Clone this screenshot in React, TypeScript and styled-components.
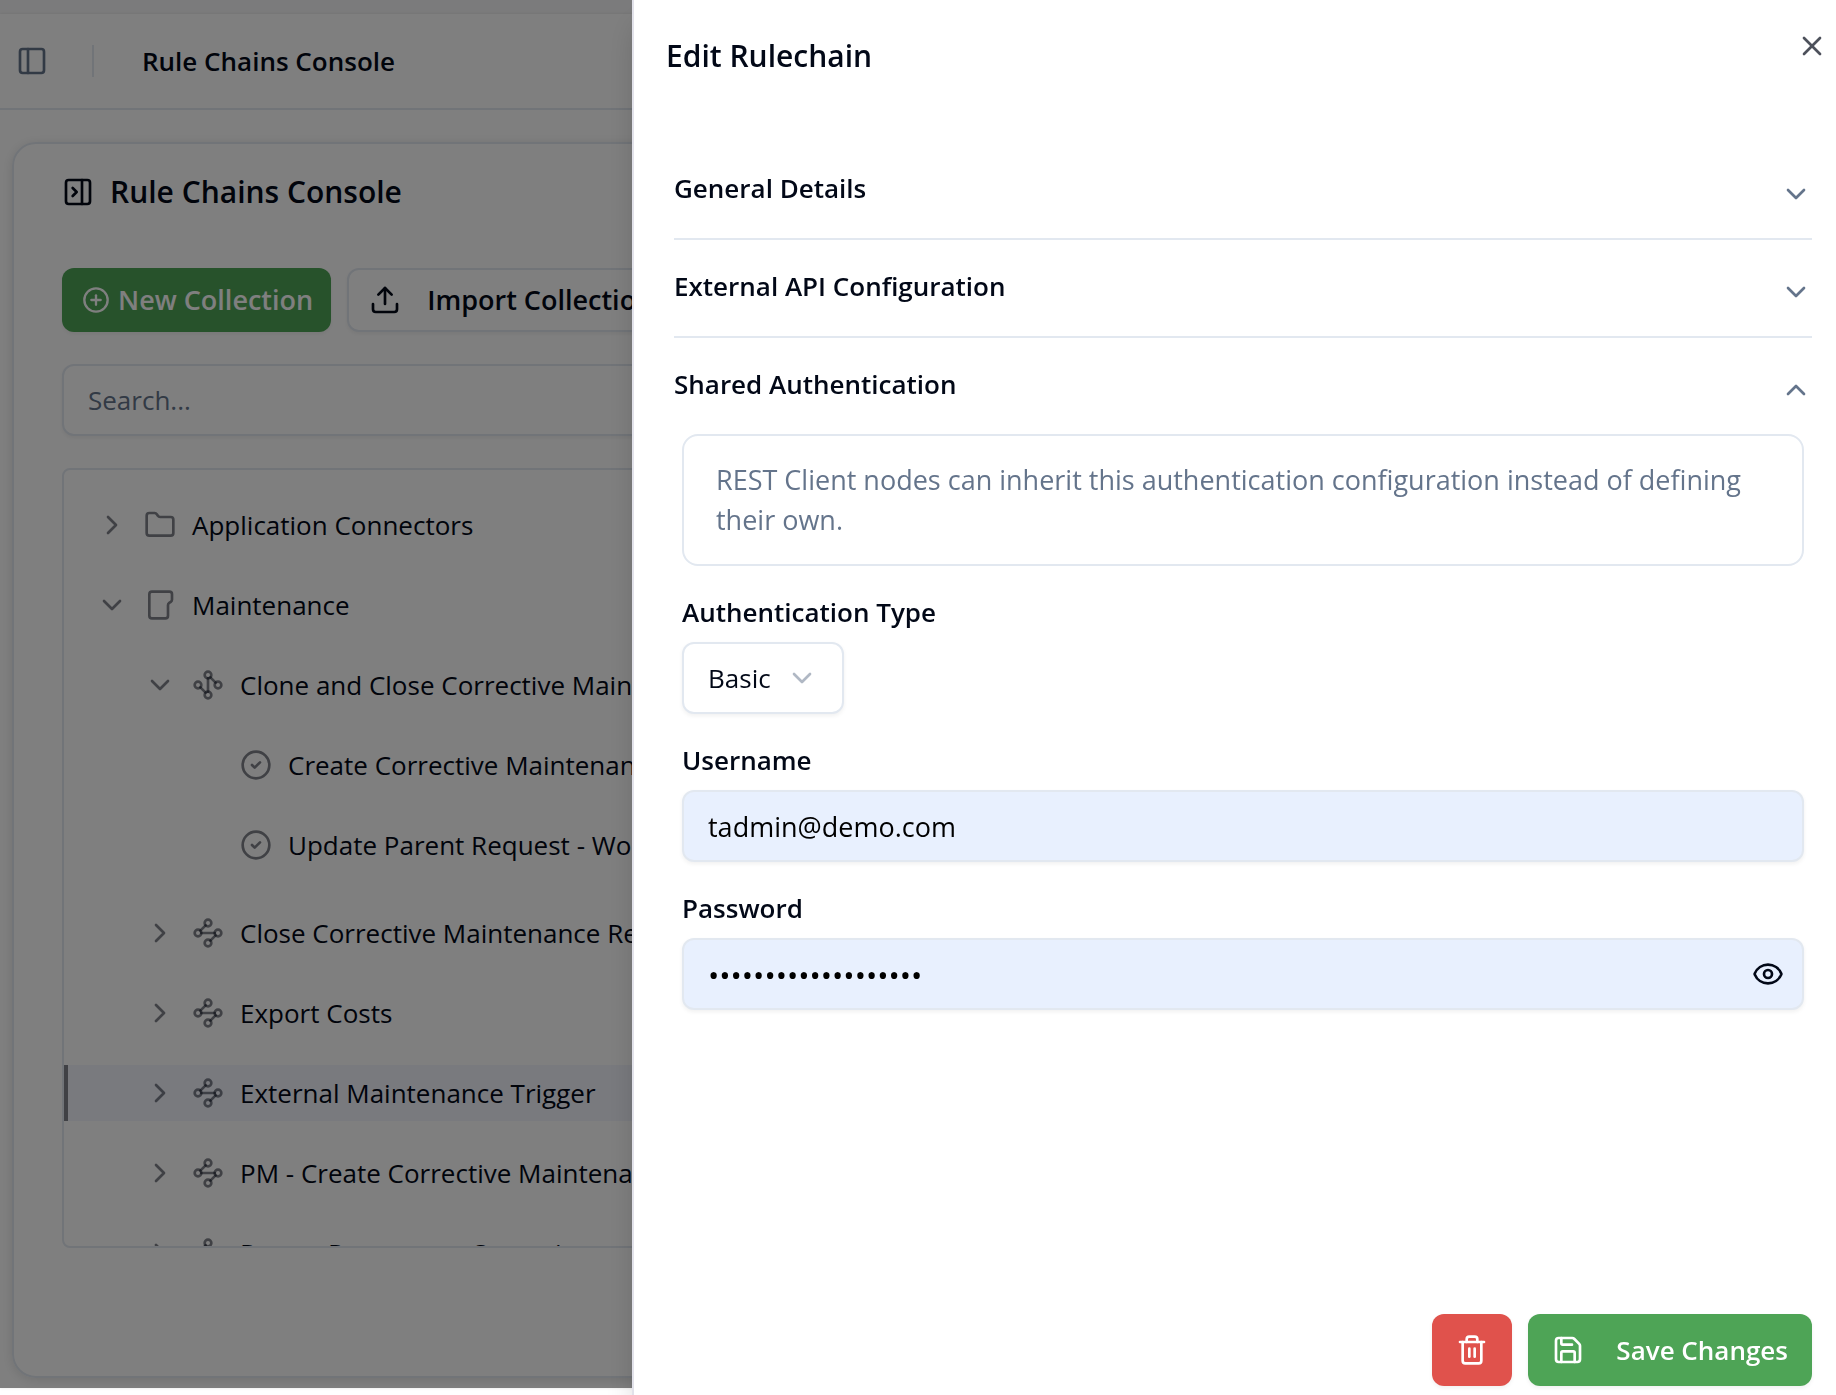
import React, { useState } from "react";
import styled, { createGlobalStyle, css } from "styled-components";
import {
  ChevronDown,
  ChevronRight,
  ChevronUp,
  CircleCheck,
  CirclePlus,
  Eye,
  Folder,
  PanelLeft,
  PanelRightClose,
  Save,
  Trash2,
  Upload,
  X,
} from "lucide-react";

const ink = "#020817";
const muted = "#64748b";
const line = "#e2e8f0";
const faint = "rgba(2, 8, 23, 0.5)";
const green = "#4ea456";
const red = "#e0524c";
const softShadow = "0 2px 4px rgba(0, 0, 0, 0.06)";

const GlobalStyle = createGlobalStyle`
  *, *::before, *::after { box-sizing: border-box; }
  body { margin: 0; background: #fff; }
  body, button, input, select {
    font-family: "Open Sans", "Noto Sans", sans-serif;
    font-size: 26px;
    line-height: 40px;
    color: ${ink};
  }
  h1, h2, h3, p, ul { margin: 0; padding: 0; font-size: inherit; font-weight: inherit; }
  button { cursor: pointer; }
  svg { flex: none; }
`;

/* ---------- page behind the sheet ---------- */

const Shell = styled.div`
  display: flex;
  flex-direction: column;
  height: 100vh;
  padding-bottom: 7px;
  overflow: hidden;
`;

const Backdrop = styled.div`
  flex: 1;
  min-height: 0;
  display: flex;
  flex-direction: column;
  padding-top: 14px;
  background: #f7f7f8;
`;

const Page = styled.main`
  flex: 1;
  min-height: 0;
  display: flex;
  flex-direction: column;
  background: #fff;
  box-shadow: 0 0 3px rgba(0, 0, 0, 0.1);
`;

const TopBar = styled.header`
  display: flex;
  align-items: center;
  height: 96px;
  padding: 0 16px;
  border-bottom: 2px solid ${line};
`;

const IconButton = styled.button<{ $tone?: string }>`
  display: grid;
  place-items: center;
  padding: 0;
  border: 0;
  background: none;
  color: ${(p) => p.$tone ?? ink};
`;

const Separator = styled.span`
  width: 2px;
  height: 32px;
  margin: 0 48px 0 44px;
  background: ${line};
`;

const PageTitle = styled.h1`
  font-weight: 600;
`;

const Card = styled.section`
  flex: 1;
  min-height: 0;
  display: flex;
  flex-direction: column;
  margin: 32px 12px 10px;
  padding: 24px 48px 128px;
  border: 2px solid ${line};
  border-radius: 24px;
  box-shadow: 0 2px 12px rgba(0, 0, 0, 0.12);
`;

const CardTitle = styled.h2`
  display: flex;
  align-items: center;
  gap: 16px;
  height: 48px;
  margin-bottom: 52px;
  font-size: 30px;
  font-weight: 600;
`;

const Actions = styled.div`
  display: flex;
  gap: 16px;
  margin-bottom: 32px;
`;

const ActionButton = styled.button<{ $primary?: boolean }>`
  display: flex;
  align-items: center;
  height: 64px;
  padding: 0 20px;
  border-radius: 12px;
  font-size: 27px;
  font-weight: 600;
  white-space: nowrap;
  box-shadow: ${softShadow};
  ${(p) =>
    p.$primary
      ? css`
          gap: 8px;
          padding: 0 18px 0 20px;
          border: 0;
          background: ${green};
          color: #fff;
        `
      : css`
          gap: 26px;
          border: 2px solid ${line};
          background: #fff;
        `}
`;

const inputBox = css`
  height: 72px;
  padding: 0 24px;
  border: 2px solid ${line};
  border-radius: 12px;
  box-shadow: ${softShadow};
`;

const Search = styled.input`
  ${inputBox}
  flex: none;
  width: 100%;
  margin-bottom: 32px;
  background: #fff;
  &::placeholder {
    color: ${muted};
    opacity: 1;
  }
`;

const Tree = styled.ul`
  flex: 1;
  min-height: 0;
  overflow: hidden;
  padding-top: 27px;
  border: 2px solid ${line};
  border-radius: 8px;
  list-style: none;
`;

const TreeRow = styled.li<{ $level: number; $selected?: boolean; $groupEnd?: boolean }>`
  display: flex;
  align-items: center;
  gap: 16px;
  height: 56px;
  margin-bottom: ${(p) => (p.$groupEnd ? 32 : 24)}px;
  padding-left: ${(p) => 28 + p.$level * 48}px;
  border-left: 4px solid ${(p) => (p.$selected ? faint : "transparent")};
  background: ${(p) => (p.$selected ? "#f3f5fd" : "none")};
  background-clip: padding-box;
  white-space: nowrap;
  svg {
    color: ${faint};
  }
`;

const Turned = styled.span`
  display: flex;
  transform: rotate(90deg);
`;

const Blank = styled.span`
  width: 32px;
`;

/* ---------- sheet ---------- */

const Overlay = styled.div`
  position: fixed;
  inset: 0 0 7px;
  background: rgba(0, 0, 0, 0.5);
`;

const Sheet = styled.aside`
  position: fixed;
  inset: 0 0 0 auto;
  display: flex;
  flex-direction: column;
  width: 1204px;
  max-width: 100%;
  padding: 32px 24px 9px 32px;
  border-left: 2px solid #e2e2ea;
  background: #fff;
  box-shadow: 0 20px 30px -6px rgba(0, 0, 0, 0.2);
`;

const SheetTitle = styled.h2`
  margin-bottom: 62px;
  font-size: 30px;
  font-weight: 600;
  line-height: 48px;
`;

const CloseSheet = styled(IconButton)`
  position: absolute;
  top: 30px;
  right: 8px;
  opacity: 0.7;
`;

const SheetBody = styled.div`
  flex: 1;
  min-height: 0;
  overflow: hidden;
  padding-left: 8px;
`;

const Item = styled.section`
  border-bottom: 2px solid ${line};
  &:last-child {
    border-bottom: 0;
  }
`;

const Trigger = styled.button`
  display: flex;
  justify-content: space-between;
  width: 100%;
  padding: 26px 0 30px;
  border: 0;
  background: none;
  font-weight: 600;
  text-align: left;
  svg {
    margin-top: 10px;
    margin-bottom: -2px;
    color: ${muted};
  }
`;

const Content = styled.div`
  display: flex;
  flex-direction: column;
  gap: 32px;
  padding: 0 8px 32px;
`;

const Note = styled.p`
  padding: 24px 32px;
  border: 2px solid ${line};
  border-radius: 16px;
  color: ${muted};
  font-size: 27px;
`;

const Field = styled.div`
  display: flex;
  flex-direction: column;
  gap: 16px;
`;

const Label = styled.label`
  font-weight: 600;
  line-height: 28px;
`;

const Control = styled.div`
  position: relative;
  display: flex;
`;

const SelectControl = styled(Control)`
  width: 162px;
  svg {
    position: absolute;
    top: 20px;
    right: 26px;
    opacity: 0.5;
    pointer-events: none;
    color: ${muted};
  }
`;

const Select = styled.select`
  ${inputBox}
  width: 100%;
  appearance: none;
  background: #fff;
`;

const Input = styled.input`
  ${inputBox}
  width: 100%;
  background: #e8f0fe;
  color: #000;
  font-size: 27px;
  &[type="password"] {
    font-size: 30px;
  }
`;

const Reveal = styled(IconButton)`
  position: absolute;
  top: 20px;
  right: 20px;
`;

const Footer = styled.footer`
  display: flex;
  justify-content: flex-end;
  gap: 16px;
`;

const FooterButton = styled.button<{ $fill: string }>`
  display: flex;
  align-items: center;
  gap: 32px;
  height: 72px;
  padding: 0 24px;
  border: 0;
  border-radius: 12px;
  background: ${(p) => p.$fill};
  color: #fff;
  font-weight: 600;
  box-shadow: ${softShadow};
`;

/* ---------- icons and data ---------- */

const Waypoints = () => (
  <svg width="32" height="32" viewBox="0 0 24 24" fill="none" stroke="currentColor" strokeWidth="2" strokeLinecap="round">
    <circle cx="12" cy="4.5" r="2.5" />
    <path d="m10.2 6.3-3.9 3.9" />
    <circle cx="4.5" cy="12" r="2.5" />
    <path d="M7 12h10" />
    <circle cx="19.5" cy="12" r="2.5" />
    <path d="m13.8 17.7 3.9-3.9" />
    <circle cx="12" cy="19.5" r="2.5" />
  </svg>
);

type Node = {
  name: string;
  kind: "folder" | "chain" | "task";
  level: number;
  open?: boolean;
  selected?: boolean;
  groupEnd?: boolean;
};

const nodes: Node[] = [
  { name: "Application Connectors", kind: "folder", level: 0 },
  { name: "Maintenance", kind: "folder", level: 0, open: true },
  { name: "Clone and Close Corrective Maintenance", kind: "chain", level: 1, open: true },
  { name: "Create Corrective Maintenance", kind: "task", level: 2 },
  { name: "Update Parent Request - Work Order", kind: "task", level: 2, groupEnd: true },
  { name: "Close Corrective Maintenance Request", kind: "chain", level: 1 },
  { name: "Export Costs", kind: "chain", level: 1 },
  { name: "External Maintenance Trigger", kind: "chain", level: 1, selected: true },
  { name: "PM - Create Corrective Maintenance", kind: "chain", level: 1 },
  { name: "Renew Recurrence Scenario", kind: "chain", level: 1 },
];

const NodeIcon = ({ node }: { node: Node }) => {
  if (node.kind === "task") return <CircleCheck size={32} />;
  const icon = node.kind === "folder" ? <Folder size={32} /> : <Waypoints />;
  return node.open ? <Turned>{icon}</Turned> : icon;
};

const NodeToggle = ({ node }: { node: Node }) => {
  if (node.kind === "task") return <Blank />;
  return (
    <IconButton aria-label={`Toggle ${node.name}`}>
      {node.open ? <ChevronDown size={32} /> : <ChevronRight size={32} />}
    </IconButton>
  );
};

const SharedAuthentication = () => {
  const [visible, setVisible] = useState(false);
  return (
    <Content>
      <Note>REST Client nodes can inherit this authentication configuration instead of defining their own.</Note>
      <Field>
        <Label htmlFor="auth-type">Authentication Type</Label>
        <SelectControl>
          <Select id="auth-type" defaultValue="Basic">
            <option>Basic</option>
          </Select>
          <ChevronDown size={32} />
        </SelectControl>
      </Field>
      <Field>
        <Label htmlFor="username">Username</Label>
        <Control>
          <Input id="username" defaultValue="tadmin@demo.com" />
        </Control>
      </Field>
      <Field>
        <Label htmlFor="password">Password</Label>
        <Control>
          <Input id="password" type={visible ? "text" : "password"} defaultValue="demo-password-12345" />
          <Reveal aria-label="Show password" onClick={() => setVisible(!visible)}>
            <Eye size={32} />
          </Reveal>
        </Control>
      </Field>
    </Content>
  );
};

const sections = ["General Details", "External API Configuration", "Shared Authentication"];

export default function App() {
  const [open, setOpen] = useState("Shared Authentication");

  return (
    <>
      <GlobalStyle />
      <Shell>
        <Backdrop>
          <Page>
            <TopBar>
              <IconButton $tone={muted} aria-label="Toggle sidebar">
                <PanelLeft size={32} />
              </IconButton>
              <Separator />
              <PageTitle>Rule Chains Console</PageTitle>
            </TopBar>
            <Card>
              <CardTitle>
                <PanelRightClose size={32} />
                Rule Chains Console
              </CardTitle>
              <Actions>
                <ActionButton $primary>
                  <CirclePlus size={28} />
                  New Collection
                </ActionButton>
                <ActionButton>
                  <Upload size={32} />
                  Import Collection
                </ActionButton>
              </Actions>
              <Search aria-label="Search" placeholder="Search..." />
              <Tree>
                {nodes.map((node) => (
                  <TreeRow key={node.name} $level={node.level} $selected={node.selected} $groupEnd={node.groupEnd}>
                    <NodeToggle node={node} />
                    <NodeIcon node={node} />
                    {node.name}
                  </TreeRow>
                ))}
              </Tree>
            </Card>
          </Page>
        </Backdrop>
      </Shell>

      <Overlay />
      <Sheet role="dialog" aria-labelledby="sheet-title">
        <SheetTitle id="sheet-title">Edit Rulechain</SheetTitle>
        <CloseSheet aria-label="Close">
          <X size={32} />
        </CloseSheet>
        <SheetBody>
          {sections.map((name) => (
            <Item key={name}>
              <h3>
                <Trigger aria-expanded={open === name} onClick={() => setOpen(open === name ? "" : name)}>
                  {name}
                  {open === name ? <ChevronUp size={32} /> : <ChevronDown size={32} />}
                </Trigger>
              </h3>
              {open === name && name === "Shared Authentication" && <SharedAuthentication />}
            </Item>
          ))}
        </SheetBody>
        <Footer>
          <FooterButton $fill={red} aria-label="Delete rulechain">
            <Trash2 size={32} />
          </FooterButton>
          <FooterButton $fill={green}>
            <Save size={32} />
            Save Changes
          </FooterButton>
        </Footer>
      </Sheet>
    </>
  );
}
